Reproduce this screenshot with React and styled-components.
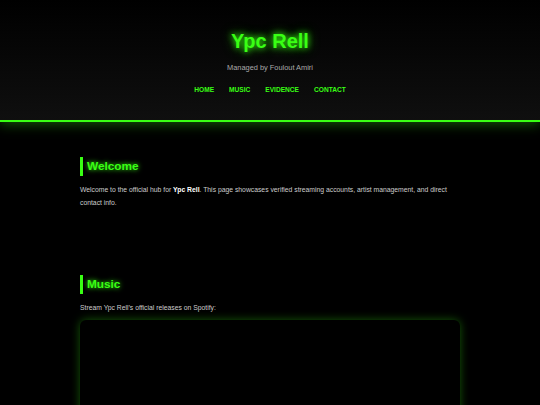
import React from 'react';
import styled, { createGlobalStyle } from 'styled-components';

const GlobalStyle = createGlobalStyle`
  * { box-sizing: border-box; }
  html, body { margin: 0; padding: 0; background: #000; }
  body {
    font-family: "Liberation Sans", Arial, sans-serif;
    color: #ccc;
    -webkit-font-smoothing: antialiased;
  }
`;

const neon = '#39ff14';

const Header = styled.header`
  height: 122px;
  padding-top: 28px;
  text-align: center;
  background: linear-gradient(to bottom, #000 0%, #0f0f0f 100%);
  border-bottom: 2px solid ${neon};
  box-shadow: 0 2px 12px rgba(57, 255, 20, 0.35);
`;

const Title = styled.h1`
  margin: 0;
  font-size: 20px;
  line-height: 26px;
  font-weight: bold;
  color: ${neon};
  text-shadow: 0 0 6px ${neon}, 0 0 12px rgba(57, 255, 20, 0.6);
`;

const Subtitle = styled.p`
  margin: 9px 0 0;
  font-size: 7.4px;
  line-height: 10px;
  color: #aaa;
`;

const Nav = styled.nav`
  display: flex;
  justify-content: center;
  gap: 15px;
  margin-top: 12px;
`;

const NavLink = styled.a`
  font-size: 6.6px;
  line-height: 10px;
  font-weight: bold;
  text-transform: uppercase;
  color: ${neon};
  text-decoration: none;
`;

const Main = styled.main`
  max-width: 380px;
  margin: 0 auto;
  padding-top: 35px;
`;

const Section = styled.section`
  margin-bottom: ${p => p.gap || 0}px;
`;

const Heading = styled.h2`
  margin: 0;
  padding-left: 4px;
  border-left: 3px solid ${neon};
  font-size: 11.8px;
  line-height: 19px;
  font-weight: bold;
  color: ${neon};
  text-shadow: 0 0 5px ${neon};
`;

const Text = styled.p`
  margin: 7px 0 0;
  font-size: 6.8px;
  line-height: 13px;
  color: #ccc;

  strong { color: #fff; }
`;

const Embed = styled.div`
  margin-top: 6px;
  height: 240px;
  border-radius: 6px;
  background: #000;
  box-shadow: 0 0 10px rgba(57, 255, 20, 0.35);
`;

export default function App() {
  const links = ['Home', 'Music', 'Evidence', 'Contact'];

  return (
    <>
      <GlobalStyle />
      <Header>
        <Title>Ypc Rell</Title>
        <Subtitle>Managed by Foulout Amiri</Subtitle>
        <Nav>
          {links.map(l => (
            <NavLink key={l} href={'#' + l.toLowerCase()}>{l}</NavLink>
          ))}
        </Nav>
      </Header>
      <Main>
        <Section id="home" gap={66}>
          <Heading>Welcome</Heading>
          <Text>
            Welcome to the official hub for <strong>Ypc Rell</strong>. This page showcases verified streaming accounts, artist management, and direct contact info.
          </Text>
        </Section>
        <Section id="music">
          <Heading>Music</Heading>
          <Text>Stream Ypc Rell’s official releases on Spotify:</Text>
          <Embed />
        </Section>
      </Main>
    </>
  );
}
